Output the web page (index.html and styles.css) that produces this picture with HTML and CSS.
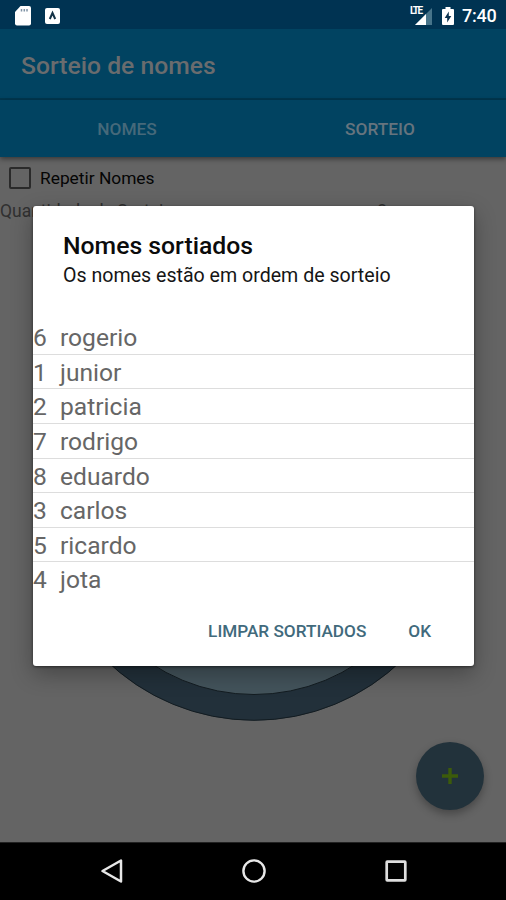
FILE: index.html
```html
<!DOCTYPE html>
<html lang="pt-BR">
<head>
<meta charset="utf-8">
<title>Sorteio de nomes</title>
<link rel="stylesheet" href="styles.css">
</head>
<body>
<div class="screen">
  <header class="status">
    <svg class="sd" width="18" height="20" viewBox="0 0 18 20"><path d="M6.5 0H15a2 2 0 0 1 2 2v15.500a2 2 0 0 1-2 2H3a2 2 0 0 1-2-2V6z" fill="#fff"/><path d="M7.500 3v2.500M10.300 3v2.500M13 3v2.500" stroke="#7f93a5" stroke-width="1.500"/></svg>
    <svg class="abox" width="15" height="16" viewBox="0 0 15 16"><rect width="15" height="16" rx="2" fill="#fff"/><path d="M4.800 11 7.500 5l2.700 6" fill="none" stroke="#143347" stroke-width="2"/></svg>
    <span class="spacer"></span>
    <div class="network"><span class="lte">LTE</span><svg width="20" height="18" viewBox="0 0 20 18"><path d="M19 1v17H2z" fill="#47748a"/><path d="M13 7v11H2z" fill="#fff"/></svg></div>
    <svg class="battery" width="12" height="18" viewBox="0 0 12 18"><path d="M3.500 0h5v2H11q1 0 1 1v14q0 1-1 1H1q-1 0-1-1V3q0-1 1-1h2.500z" fill="#fff"/><path d="M6.800 4.500 2.700 11h2.500v4.500L9.300 9H6.800z" fill="#0b3350"/></svg>
    <time class="clock">7:40</time>
  </header>
  <div class="appbar"><h1>Sorteio de nomes</h1></div>
  <nav class="tabs"><span class="tab">NOMES</span><span class="tab active">SORTEIO</span></nav>
  <main class="content">
    <label class="repeat"><span class="box"></span>Repetir Nomes</label>
    <div class="amount"><span>Quantidade de Sorteios</span><span class="value">2</span></div>
    <svg class="wheel" width="426" height="426" viewBox="0 0 426 426"><circle cx="213" cy="213" r="199.500" fill="#43535b" stroke="#22303a" stroke-width="26"/><circle cx="213" cy="213" r="212.300" fill="none" stroke="#131c21"/><circle cx="213" cy="213" r="186.500" fill="none" stroke="#131c21"/></svg>
    <div class="fab"><svg width="18" height="18" viewBox="0 0 18 18"><path d="M9 1v16M1 9h16" stroke="#3c5b0b" stroke-width="3.400"/></svg></div>
  </main>
  <footer class="nav">
    <svg width="24" height="26" viewBox="0 0 24 26"><path d="M21 2.500v21L2.500 13z" fill="none" stroke="#e8e8e8" stroke-width="2.500" stroke-linejoin="round"/></svg>
    <svg width="24" height="26" viewBox="0 0 24 26"><circle cx="12" cy="13" r="10.600" fill="none" stroke="#e8e8e8" stroke-width="2.400"/></svg>
    <svg width="24" height="26" viewBox="0 0 24 26"><rect x="2.700" y="3.700" width="18.600" height="18.600" rx=".5" fill="none" stroke="#dedede" stroke-width="2.700"/></svg>
  </footer>
  <section class="dialog">
    <h2>Nomes sortiados</h2>
    <p>Os nomes estão em ordem de sorteio</p>
    <ul class="names">
      <li><b>6</b>rogerio</li>
      <li><b>1</b>junior</li>
      <li><b>2</b>patricia</li>
      <li><b>7</b>rodrigo</li>
      <li><b>8</b>eduardo</li>
      <li><b>3</b>carlos</li>
      <li><b>5</b>ricardo</li>
      <li><b>4</b>jota</li>
    </ul>
    <div class="actions"><span>LIMPAR SORTIADOS</span><span>OK</span></div>
  </section>
</div>
</body>
</html>
```
FILE: styles.css
```css
* { box-sizing: border-box; }
body { margin: 0; font-family: Roboto, sans-serif; }
h1, h2, p, ul { margin: 0; padding: 0; }
svg { display: block; flex: none; }
.screen { position: relative; width: 506px; height: 900px; display: flex; flex-direction: column; background: #646464; overflow: hidden; }
.status { height: 29px; flex: none; display: flex; align-items: center; padding: 2px 9px 0 14px; background: #003352; color: #fff; }
.abox { margin-left: 13px; }
.spacer { flex: 1; }
.network { position: relative; width: 24px; height: 18px; padding-left: 3px; }
.lte { position: absolute; left: 0; top: -1px; font-size: 10px; line-height: 10px; font-weight: 700; letter-spacing: -1.5px; }
.battery { margin-left: 8px; }
.clock { width: 35px; margin-left: 8px; font-size: 18px; font-weight: 500; line-height: 24px; letter-spacing: -0.2px; white-space: nowrap; }
.appbar { height: 71px; flex: none; display: flex; align-items: center; padding: 5px 0 0 21px; background: #014361; border-bottom: 2px solid #01374f; color: #6a6c6e; }
h1 { font-size: 24.700px; font-weight: 500; line-height: 30px; }
.tabs { height: 57px; flex: none; display: grid; grid-template-columns: 1fr 1fr; background: #014361; box-shadow: 0 2px 5px rgba(0,0,0,.45); position: relative; }
.tab { text-align: center; line-height: 58px; padding-left: 1px; font-size: 17.300px; font-weight: 500; color: #46697a; }
.active { color: #66747e; }
.content { position: relative; flex: 1; display: flex; flex-direction: column; align-items: center; }
.repeat { width: 100%; height: 42px; display: flex; align-items: center; padding-left: 9px; font-size: 17.350px; color: #050505; }
.box { width: 22px; height: 22px; margin-right: 9px; border: 2px solid #2a2a2a; border-radius: 2px; }
.amount { width: 100%; height: 24px; display: flex; justify-content: space-between; padding-right: 119px; font-size: 17.500px; line-height: 24px; color: #303030; }
.wheel { margin: 72px 0 0 2px; }
.fab { position: absolute; right: 22px; bottom: 32px; width: 68px; height: 68px; border-radius: 50%; background: #22323b; box-shadow: 0 4px 9px rgba(0,0,0,.3); display: grid; place-items: center; }
.nav { height: 58px; flex: none; display: flex; gap: 118px; justify-content: center; align-items: center; padding: 0 0 2px 2px; background: #000; border-top: 1px solid #222; }
.dialog { position: absolute; left: 33px; top: 206px; width: 441px; height: 460px; padding-top: 25px; display: flex; flex-direction: column; background: #fff; border-radius: 3px; box-shadow: 0 8px 22px rgba(0,0,0,.3), 0 1px 3px rgba(0,0,0,.5); }
h2 { padding-left: 30px; font-size: 24.750px; line-height: 30px; font-weight: 500; color: #0b0b0b; }
.dialog p { padding-left: 30px; font-size: 19.600px; line-height: 30px; color: #151515; }
.names { margin-top: 29px; list-style: none; font-size: 24.600px; color: #666; }
.names li { height: 34.640px; display: flex; line-height: 35px; border-bottom: 1px solid #ddd; }
.names li:last-child { border-bottom: 0; }
.names b { width: 27px; font-weight: 400; }
.actions { margin-top: 21px; display: flex; gap: 42px; justify-content: flex-end; padding-right: 43px; font-size: 17.200px; font-weight: 500; line-height: 26px; color: #416a7c; }
```
